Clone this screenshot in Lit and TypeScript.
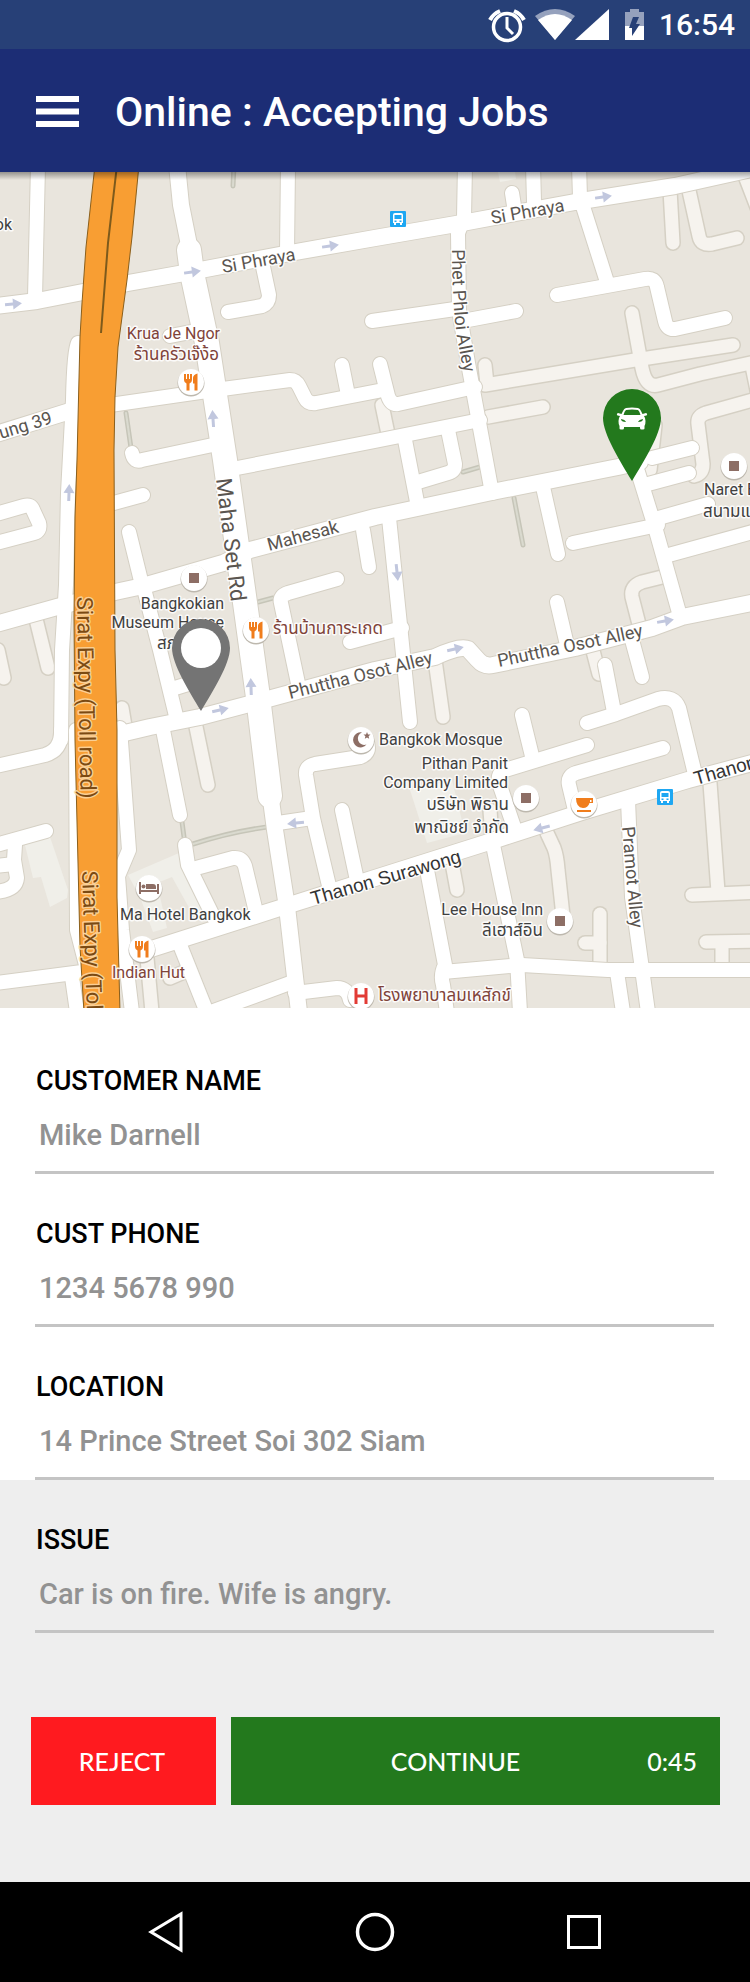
import { LitElement, html, css, svg } from "lit";
import { customElement, property, state } from "lit/decorators.js";

interface Label {
  text: string;
  x: number;
  y: number;
  angle?: number;
  kind: string;
}

const LANES: string[] = [
  "M35 615 L48 668",
  "M-2 650 L4 678",
  "M122 708 L126 732",
  "M195 722 L208 785",
  "M632 313 L642 368 Q646 388 658 385 L700 374 L760 361",
  "M485 385 L635 360 L733 345",
  "M485 365 L487 384",
  "M488 417 L543 407",
  "M670 190 L673 243",
  "M688 186 L699 236 Q701 246 712 244 L737 238",
  "M745 176 L757 207",
  "M752 366 L758 395",
  "M760 398 L706 413 Q697 416 698 424 L703 464 Q703 474 694 476",
  "M655 425 L650 470",
  "M662 577 L642 582 Q630 586 632 597 L641 632",
  "M592 647 L599 674",
  "M435 660 L443 717",
  "M710 783 L718 892",
  "M692 895 L760 892",
  "M547 833 L554 848 Q557 856 558 870 L563 916",
  "M600 914 L600 966",
  "M585 943 L600 943",
  "M706 942 L760 941",
  "M722 945 L722 968",
  "M452 863 L457 890",
  "M490 810 L492 838",
  "M147 958 L152 1012",
  "M170 978 L184 972",
  "M382 405 L388 434",
];

const STREETS: string[] = [
  "M38 165 L35 298",
  "M288 165 L287 252",
  "M262 262 L269 295 Q269 303 262 306 L228 312",
  "M170 336 L196 331",
  "M372 321 L455 309",
  "M468 320 L516 311",
  "M110 405 L200 392 L290 380 Q296 380 299 386 L305 398 Q308 404 316 403 L378 391",
  "M342 365 L348 395",
  "M380 364 L388 396 Q391 405 398 404 L475 387",
  "M132 453 Q134 463 142 460 L222 443",
  "M232 469 L375 441 L480 420",
  "M-4 514 L24 506 Q31 504 33 510 L39 523 Q41 531 34 533 L-4 543",
  "M110 504 L143 495",
  "M129 532 L142 585",
  "M143 585 L160 650 L177 720",
  "M337 579 L288 593 Q279 596 281 603 L299 688",
  "M350 642 L402 628",
  "M363 530 L369 567",
  "M405 440 L418 507",
  "M448 430 L455 464 Q455 471 448 473 L418 482",
  "M465 165 L464 218 L458 233 L459 310 L468 363 L492 493",
  "M543 487 L558 554",
  "M573 543 L658 525",
  "M638 472 L655 527 L680 616",
  "M648 484 L689 473",
  "M652 458 L692 448",
  "M655 519 L708 504",
  "M665 556 L756 531",
  "M632 640 L642 677",
  "M557 602 L567 645",
  "M605 665 L614 712",
  "M587 723 L616 714 L658 699 Q674 695 679 708 L694 770",
  "M389 518 L410 722",
  "M522 715 L533 760",
  "M587 745 L505 770 Q497 773 499 783 L515 830",
  "M663 748 L576 773 Q567 776 569 785 L575 810",
  "M628 800 L632 897 L648 1012",
  "M427 870 L445 965 Q440 975 443 985 L447 1012",
  "M443 972 L522 965 L608 970 L760 970",
  "M493 845 L517 960 L520 1012",
  "M617 972 L623 1012",
  "M512 193 L515 212",
  "M533 165 L534 202",
  "M579 165 L580 197 L607 282",
  "M557 295 L645 279 Q655 277 657 287 L665 321 Q667 330 675 329 L725 318",
  "M120 728 L129 850 L118 876 L122 930 L132 1012",
  "M162 725 L180 815",
  "M185 845 L188 865 L214 918",
  "M196 868 L233 858 Q242 857 245 866 L256 912",
  "M366 740 Q372 753 360 757 L315 764 Q305 766 306 775 L313 818 L330 890",
  "M278 823 L312 818",
  "M342 810 L358 885",
  "M180 945 L206 1010",
  "M200 1016 L290 983",
  "M295 993 L337 988 Q348 988 350 1000",
  "M-4 845 L46 831",
  "M15 845 L14 860 L17 878 Q16 890 -4 892",
  "M-4 866 L14 864",
  "M-4 983 L82 972",
  "M72 977 L77 1012",
  "M-4 766 L45 755 Q62 750 61 730",
  "M175 688 L188 684",
  "M78 343 Q74 350 73 400 L68 493 L66 585 L62 650 L61 740 M76 730 L77 930 L86 965",
];

const AVENUES: string[] = [
  "M-4 306 L37 301 L83 292 L128 283 L190 272 L290 253 L375 238 L462 223 L575 202 L675 186 L756 168",
  "M177 165 L181 205 L190 250",
  "M-4 434 L70 411",
  "M-4 624 L57 607 L115 592 L143 586 L223 563 L250 550 L375 517 L492 492 L618 467 L640 462",
  "M112 736 L150 727 L200 717 L257 702 L375 670 L435 657 Q460 645 468 649 L478 660 Q484 667 493 665 L575 648 L652 628 L682 617 L756 602",
  "M271 800 L275 830 L287 907 L299 1012",
  "M145 951 L283 907 L375 878 L492 841 L582 812 L688 780 L756 762",
];

const BOULEVARDS: string[] = ["M189 250 L192 273 L207 343 L225 460 L247 617 L258 697 L270 796"];

const FOOTPATHS: string[] = [
  "M234 165 L233 186",
  "M126 413 L131 448",
  "M258 602 L273 598",
  "M463 472 L480 467",
  "M514 498 L523 545",
  "M182 822 L184 837",
  "M193 844 Q230 832 267 827",
];

const BLOCKS: string[] = [
  "M25 845 L50 837 L68 890 L67 898 L50 907 L41 877 L33 878Z",
  "M128 875 L179 853 L212 922 L192 913 L172 877 L157 883 L167 928 L153 932 L140 897Z",
  "M410 790 L452 780 L465 833 L427 843Z",
  "M498 172 L515 172 L516 179 L500 182Z",
];

const EXPRESSWAY =
  "M95 165 L86 247 L82 303 L80 337 L77 460 L75 517 L74 617 L75 740 L78 863 L80 947 L84 1012 L120 1012 L117 897 L117 730 L115 650 L114 450 L115 397 L118 347 L127 280 L132 237 L139 165Z";

const ARROWS: [number, number, number][] = [
  [192, 272, -8], [13, 304, -5], [330, 246, -8], [213, 419, -94], [603, 197, -8],
  [69, 493, -88], [220, 710, -13], [251, 687, -92], [397, 572, 84], [455, 649, -13],
  [665, 621, -10], [296, 823, 174], [542, 828, 165],
];

const LABELS: Label[] = [
  { text: "Si Phraya", x: 223, y: 273, angle: -10, kind: "road" },
  { text: "Si Phraya", x: 492, y: 224, angle: -10, kind: "road" },
  { text: "Mahesak", x: 269, y: 551, angle: -15, kind: "road" },
  { text: "Phuttha Osot Alley", x: 290, y: 699, angle: -14, kind: "road" },
  { text: "Phuttha Osot Alley", x: 499, y: 667, angle: -12, kind: "road" },
  { text: "Pramot Alley", x: 622, y: 827, angle: 85, kind: "road" },
  { text: "ung 39", x: 1, y: 439, angle: -17, kind: "road" },
  { text: "Maha Set Rd", x: 216, y: 479, angle: 83, kind: "road large" },
  { text: "Thanon Surawong", x: 313, y: 905, angle: -16, kind: "main" },
  { text: "Thanon Surawong", x: 696, y: 785, angle: -16, kind: "main" },
  { text: "Sirat Expy (Toll road)", x: 77, y: 597, angle: 89, kind: "toll" },
  { text: "Sirat Expy (Toll road)", x: 82, y: 871, angle: 88, kind: "toll" },
  { text: "ok", x: 12, y: 230, kind: "place end" },
  { text: "Krua Je Ngor", x: 220, y: 339, kind: "food end" },
  { text: "ร้านครัวเจ๊ง้อ", x: 219, y: 360, kind: "food end thai" },
  { text: "ร้านบ้านการะเกด", x: 273, y: 634, kind: "food thai" },
  { text: "Bangkokian", x: 224, y: 609, kind: "place end" },
  { text: "Museum House", x: 224, y: 628, kind: "place end" },
  { text: "สภ", x: 157, y: 649, kind: "place thai" },
  { text: "Bangkok Mosque", x: 379, y: 745, kind: "place" },
  { text: "Pithan Panit", x: 508, y: 769, kind: "place end" },
  { text: "Company Limited", x: 508, y: 788, kind: "place end" },
  { text: "บริษัท พิธาน", x: 509, y: 810, kind: "place end thai" },
  { text: "พาณิชย์ จำกัด", x: 509, y: 833, kind: "place end thai" },
  { text: "Lee House Inn", x: 543, y: 915, kind: "place end" },
  { text: "ลีเฮาส์อิน", x: 543, y: 936, kind: "place end thai" },
  { text: "Naret B", x: 704, y: 495, kind: "place" },
  { text: "สนามแบ", x: 703, y: 517, kind: "place thai" },
  { text: "Ma Hotel Bangkok", x: 120, y: 920, kind: "place" },
  { text: "Indian Hut", x: 112, y: 978, kind: "food" },
  { text: "โรงพยาบาลมเหสักข์", x: 378, y: 1001, kind: "food thai" },
];

const POINTS: [string, number, number][] = [
  ["fork", 191, 382], ["fork", 256, 630], ["fork", 142, 949],
  ["square", 194, 578], ["square", 734, 466], ["square", 526, 798], ["square", 560, 921],
  ["moon", 361, 740], ["bed", 149, 888], ["cup", 584, 804], ["hospital", 361, 996],
];

const GLYPHS: Record<string, unknown> = {
  fork: svg`<path fill="#f07d1c" d="M-7 -8h2v5h1v-5h2v5h1v-5h2v6q0 2.500-2.500 3.500v7h-3v-7Q-7 .5-7-2zM6.500-8.500v17h-3V1.500H2V-4q0-3.500 4.500-4.500z"/>`,
  square: svg`<rect class="brown" x="-5" y="-5" width="10" height="10"/>`,
  moon: svg`<path class="brown" d="M1-7.500A7.500 7.500 0 1 0 5.500 4.500 6 6 0 1 1 1-7.500zM6-8l1 2.400 2.500.2-1.900 1.700.6 2.500L6-2.500 3.800-1.200l.6-2.500L2.500-5.400 5-5.600z"/>`,
  bed: svg`<path class="brown" d="M-10-6h2V2H8v-6h2V6H8V4H-8v2h-2zM-3-4H4q3 0 3 3v2H-3z"/><circle class="brown" cx="-5.500" cy="-1.500" r="2"/>`,
  cup: svg`<path fill="#f07d1c" fill-rule="evenodd" d="M-8-6H9v5H5.500Q4 4-1 4-8 3.500-8-6zM6-4v2h1.500v-2zM-7 6H7v2H-7z"/>`,
  hospital: svg`<path fill="#e23b35" d="M-6.500-8h3v6.500h7V-8h3V8h-3V1.500h-7V8h-3z"/>`,
};

@customElement("city-map")
export class CityMap extends LitElement {
  static styles = css`
    :host { display: block; }
    .canvas { display: block; width: 100%; height: auto; background: #e9e5dd; }
    .line { fill: none; stroke-linecap: round; stroke-linejoin: round; }
    .lane { stroke: #f6f3ee; stroke-width: 13; }
    .street { stroke: #fff; stroke-width: 14; }
    .avenue { stroke: #fff; stroke-width: 16; }
    .boulevard { stroke: #fff; stroke-width: 24; }
    .lane.edge, .street.edge { stroke: #d5d0c4; stroke-width: 16; }
    .avenue.edge { stroke: #d5d0c4; stroke-width: 18; }
    .boulevard.edge { stroke: #d5d0c4; stroke-width: 26; }
    .foot-edge { stroke: #c6c5b8; stroke-width: 5; }
    .foot { stroke: #dadacf; stroke-width: 2; }
    .block { fill: #f0efe9; }
    .expressway { fill: #f89e33; stroke: #8a5f1c; stroke-width: 1; }
    .divider { fill: none; stroke: #7d5a1c; stroke-width: 2; }
    .arrow { fill: #c1c7de; }
    .brown { fill: #8d6e65; }
    .disc { fill: #fff; }
    .disc-shadow { fill: #bdb8ae; }
    .label {
      font-family: Roboto, "Noto Sans Thai", "Noto Sans", sans-serif;
      font-size: 16px;
      paint-order: stroke;
      stroke: #fff;
      stroke-opacity: 0.85;
      stroke-width: 3px;
      stroke-linejoin: round;
      fill: #404040;
    }
    .thai { font-size: 17px; }
    .road { font-size: 18px; fill: #5a5550; }
    .large { font-size: 22px; }
    .main { font-family: "Liberation Sans", Arial, sans-serif; font-size: 19px; fill: #333; }
    .toll { font-size: 22px; fill: #7b4a12; stroke: #fbd9a6; }
    .food { fill: #7f4339; }
    .end { text-anchor: end; }
  `;

  private strokes(paths: string[], cls: string) {
    return paths.map((d) => svg`<path class="line ${cls}" d=${d} />`);
  }

  render() {
    return html`
      <svg class="canvas" viewBox="0 172 750 836" role="img" aria-label="Map of Bang Rak, Bangkok">
        <defs>
          <linearGradient id="fade" x1="0" y1="0" x2="0" y2="1">
            <stop offset="0" stop-color="#000" stop-opacity="0.36" />
            <stop offset="1" stop-color="#000" stop-opacity="0" />
          </linearGradient>
          <path id="phet" d="M452 249 C452 285 454 315 457 338 L468 395" />
        </defs>
        ${BLOCKS.map((d) => svg`<path class="block" d=${d} />`)}
        ${this.strokes(FOOTPATHS, "foot-edge")}${this.strokes(FOOTPATHS, "foot")}
        ${this.strokes(LANES, "lane edge")}${this.strokes(LANES, "lane")}
        ${this.strokes(STREETS, "street edge")}${this.strokes(AVENUES, "avenue edge")}
        ${this.strokes(BOULEVARDS, "boulevard edge")}
        ${this.strokes(STREETS, "street")}${this.strokes(AVENUES, "avenue")}
        ${this.strokes(BOULEVARDS, "boulevard")}
        <path class="expressway" d=${EXPRESSWAY} />
        <path class="divider" d="M117 165 L108 243 L101 333" />
        ${ARROWS.map(
          ([x, y, a]) => svg`<path class="arrow" transform="translate(${x} ${y}) rotate(${a})"
            d="M-8-1.500H0V-5.500L9 0 0 5.500V1.500H-8z" />`
        )}
        ${POINTS.map(
          ([name, x, y]) => svg`<g transform="translate(${x} ${y})">
            <circle class="disc-shadow" cy="1" r="13.500" /><circle class="disc" r="13" />${GLYPHS[name]}</g>`
        )}
        ${[[398, 219], [665, 797]].map(
          ([x, y]) => svg`<g transform="translate(${x} ${y})">
            <rect x="-8" y="-8" width="16" height="16" rx="1" fill="#1ea7f2" />
            <path fill="#fff" fill-rule="evenodd" d="M-3-6H3Q5-6 5-4V4H4V6H2V4H-2V6H-4V4H-5V-4Q-5-6-3-6zM-3.500-4V0H3.500V-4zM-3.500 1.500v1.500h2v-1.500zM1.500 1.500v1.500h2v-1.500z" /></g>`
        )}
        ${LABELS.map(
          (l) => svg`<text class="label ${l.kind}" transform="translate(${l.x} ${l.y}) rotate(${l.angle ?? 0})">${l.text}</text>`
        )}
        <text class="label road"><textPath href="#phet">Phet Phloi Alley</textPath></text>
        <g transform="translate(201 648)">
          <path fill="#747474" d="M0-29A29 29 0 0 1 29 0C29 16 12 43 0 63-12 43-29 16-29 0A29 29 0 0 1 0-29z" />
          <circle fill="#fff" r="20" />
        </g>
        <g transform="translate(632 418)">
          <path fill="#23791d" d="M0-29A29 29 0 0 1 29 0C29 16 12 43 0 63-12 43-29 16-29 0A29 29 0 0 1 0-29z" />
          <path fill="#fff" fill-rule="evenodd" d="M-6-10Q0-11 6-10 8-9.500 9-7L10.500-4 14-5Q16-4 14.500-2.500L12-2Q13.500 0 13.500 3 13.500 7 12.500 8V10.500Q12.500 11.500 11 11.500H9.500Q8 11.500 8 10V9H-8V10Q-8 11.500-9.500 11.500H-11Q-12.500 11.500-12.500 10.500V8Q-13.500 7-13.500 3-13.500 0-12-2L-14.500-2.500Q-16-4-14-5L-10.500-4-9-7Q-8-9.500-6-10zM-6-8Q-7.500-7-8.500-3H8.500Q7.500-7 6-8 0-9-6-8zM-11 1Q-11 4-6 4-7 1.500-11 1zM11 1Q7 1.500 6 4 11 4 11 1z" />
        </g>
        <rect x="0" y="172" width="750" height="8" fill="url(#fade)" />
      </svg>
    `;
  }
}

@customElement("form-field")
export class FormField extends LitElement {
  @property() label = "";
  @property() value = "";

  static styles = css`
    :host { display: block; padding: 44px 36px 0 35px; }
    .caption {
      display: block;
      margin-left: 1px;
      font: 500 27px/32px Roboto, sans-serif;
      color: #000;
    }
    .entry {
      display: block;
      box-sizing: border-box;
      width: 100%;
      height: 77px;
      margin: 0;
      padding: 18px 4px 16px;
      border: 0;
      border-bottom: 3px solid #c4c4c4;
      border-radius: 0;
      outline: none;
      background: transparent;
      font: 500 29px/40px Roboto, sans-serif;
      color: #929292;
    }
  `;

  render() {
    return html`
      <label class="caption" for="entry">${this.label}</label>
      <input class="entry" id="entry" type="text" .value=${this.value} />
    `;
  }
}

@customElement("app-root")
export class AppRoot extends LitElement {
  @state() private seconds = 45;

  static styles = css`
    :host {
      display: flex;
      flex-direction: column;
      min-height: 100vh;
      background: #eee;
      font-family: Roboto, sans-serif;
    }
    .status {
      display: flex;
      align-items: center;
      justify-content: flex-end;
      height: 49px;
      padding-right: 15px;
      background: #274077;
      color: #fff;
      font-size: 30px;
      font-weight: 500;
      line-height: 49px;
    }
    .status-icons { display: block; margin-right: 14px; }
    .bar {
      display: flex;
      align-items: center;
      gap: 36px;
      box-sizing: border-box;
      height: 123px;
      padding: 3px 36px 0;
      background: #1c2d75;
      color: #fff;
    }
    .menu, .key {
      display: flex;
      align-items: center;
      justify-content: center;
      padding: 0;
      border: 0;
      background: none;
      color: inherit;
      cursor: pointer;
    }
    .title { margin: 0; font-size: 41px; font-weight: 500; line-height: 52px; white-space: nowrap; }
    .details { padding-top: 13px; background: #fff; }
    .actions {
      display: grid;
      grid-template-columns: 185fr 489fr;
      gap: 15px;
      padding: 84px 30px 77px 31px;
    }
    .action {
      display: flex;
      align-items: center;
      justify-content: center;
      height: 88px;
      padding: 0 3px 0 0;
      border: 0;
      color: #fff;
      font: 500 25px/32px "Lato Medium", Lato, sans-serif;
      cursor: pointer;
    }
    .reject { background: #ff1a1f; }
    .continue { padding: 0 23px 0 33px; background: #23791d; }
    .grow { flex: 1; }
    .keys {
      display: flex;
      height: 100px;
      margin-top: auto;
      padding: 0 61px;
      background: #000;
    }
    .key { flex: 1; }
  `;

  private get clock() {
    return `${Math.floor(this.seconds / 60)}:${String(this.seconds % 60).padStart(2, "0")}`;
  }

  render() {
    return html`
      <div class="status">
        <svg class="status-icons" width="157" height="36" viewBox="488 6 157 36" aria-hidden="true">
          <g fill="none" stroke="#fff">
            <circle cx="507" cy="26" r="13.500" stroke-width="3.500" />
            <path d="M507 16V27L513 33" stroke-width="3" />
            <path d="M490 19Q493 13 500 10M524 19Q521 13 514 10" stroke-width="4" />
          </g>
          <path fill="#95a1bd" d="M535 15Q555 1 575 15L555 39z" />
          <path fill="#fff" d="M538 19Q555 7 572 19L555 39z" />
          <path fill="#fff" d="M609 8V39H575z" />
          <path fill="#95a1bd" d="M630 8H639V11H644V25H625V11H630z" />
          <path fill="#fff" d="M625 25H644V39H625z" />
          <path fill="#274077" d="M633 16H639L636 23H640L632 35V27H629z" />
        </svg>
        <span>16:54</span>
      </div>
      <header class="bar">
        <button class="menu" aria-label="Menu">
          <svg width="43" height="32" viewBox="0 0 43 32" aria-hidden="true">
            <path fill="#fff" d="M0 0H43V6H0zM0 12.500H43V18.500H0zM0 25H43V31H0z" />
          </svg>
        </button>
        <h1 class="title">Online : Accepting Jobs</h1>
      </header>
      <city-map></city-map>
      <section class="details">
        <form-field label="CUSTOMER NAME" value="Mike Darnell"></form-field>
        <form-field label="CUST PHONE" value="1234 5678 990"></form-field>
        <form-field label="LOCATION" value="14 Prince Street Soi 302 Siam"></form-field>
      </section>
      <form-field label="ISSUE" value="Car is on fire. Wife is angry."></form-field>
      <div class="actions">
        <button class="action reject">REJECT</button>
        <button class="action continue"><span class="grow">CONTINUE</span><span>${this.clock}</span></button>
      </div>
      <nav class="keys">
        <button class="key" aria-label="Back">
          <svg width="36" height="44" viewBox="0 0 36 44" aria-hidden="true">
            <path d="M33 4V40L3 22z" fill="none" stroke="#fff" stroke-width="3" />
          </svg>
        </button>
        <button class="key" aria-label="Home">
          <svg width="40" height="40" viewBox="0 0 40 40" aria-hidden="true">
            <circle cx="20" cy="20" r="17.500" fill="none" stroke="#fff" stroke-width="3.500" />
          </svg>
        </button>
        <button class="key" aria-label="Overview">
          <svg width="36" height="36" viewBox="0 0 36 36" aria-hidden="true">
            <rect x="2.500" y="2.500" width="31" height="31" fill="none" stroke="#fff" stroke-width="3" />
          </svg>
        </button>
      </nav>
    `;
  }
}
